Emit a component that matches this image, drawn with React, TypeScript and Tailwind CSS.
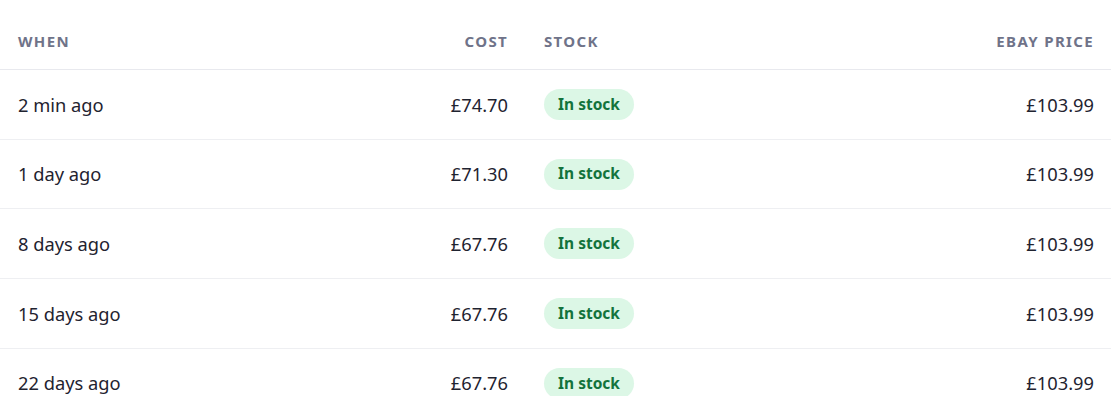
import React from "react";

interface Row {
  when: string;
  cost: string;
  stock: string;
  ebay: string;
}

const rows: Row[] = [
  { when: "2 min ago", cost: "£74.70", stock: "In stock", ebay: "£103.99" },
  { when: "1 day ago", cost: "£71.30", stock: "In stock", ebay: "£103.99" },
  { when: "8 days ago", cost: "£67.76", stock: "In stock", ebay: "£103.99" },
  { when: "15 days ago", cost: "£67.76", stock: "In stock", ebay: "£103.99" },
  { when: "22 days ago", cost: "£67.76", stock: "In stock", ebay: "£103.99" },
];

const cols = "grid grid-cols-[263px_263px_1fr_300px]";

export default function App() {
  return (
    <div className="w-[1111px] h-[396px] overflow-hidden bg-white text-[#1f2330] font-['Noto_Sans',sans-serif]">
      <div className={`${cols} border-b border-[#e8e9ee] pt-[31px] pb-[18px] text-[15px] leading-5 font-bold tracking-[0.09em] uppercase text-[#6f7389]`}>
        <div className="px-[18px]">When</div>
        <div className="px-[18px] text-right">Cost</div>
        <div className="px-[18px]">Stock</div>
        <div className="px-[17px] text-right">eBay Price</div>
      </div>

      {rows.map((r, i) => (
        <div key={i} className={`${cols} h-[69.7px] items-center border-b border-[#eeeff2] text-[18.3px]`}>
          <div className="px-[18px]">{r.when}</div>
          <div className="px-[18px] text-right">{r.cost}</div>
          <div className="px-[18px]">
            <span className="inline-flex items-center h-[31px] px-[14px] rounded-full bg-[#dcf7e6] text-[#13733c] text-[15.5px] font-bold">
              {r.stock}
            </span>
          </div>
          <div className="px-[17px] text-right">{r.ebay}</div>
        </div>
      ))}
    </div>
  );
}
